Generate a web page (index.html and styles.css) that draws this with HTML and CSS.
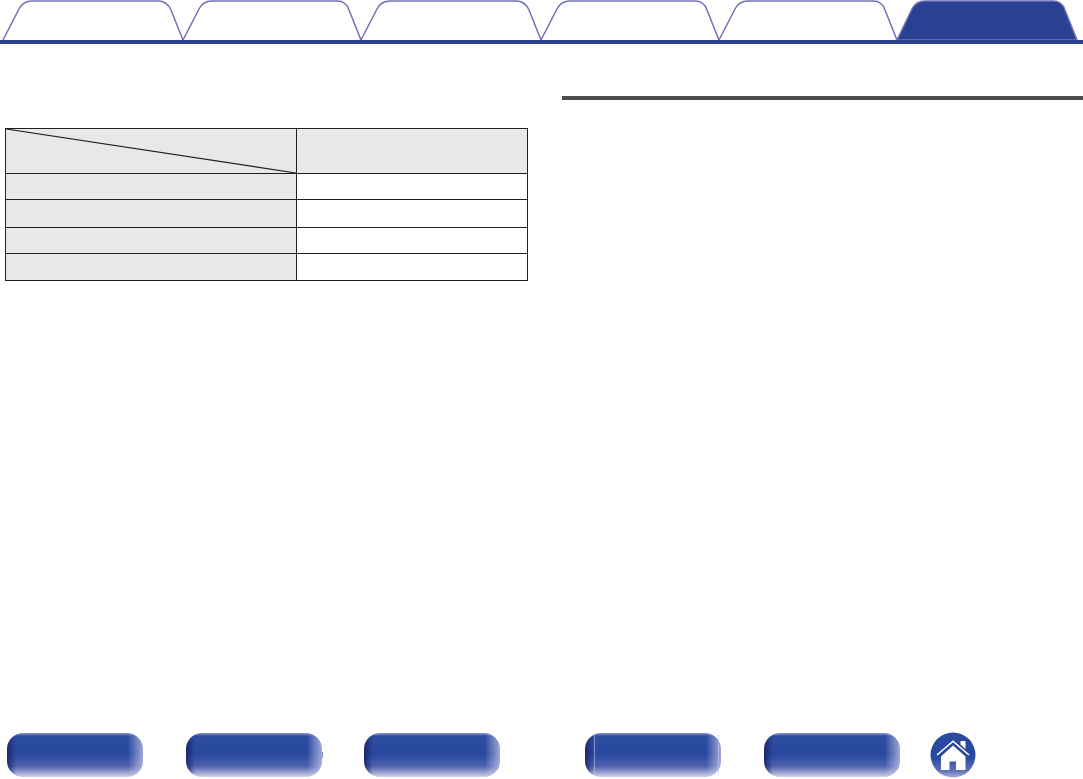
FILE: index.html
```html
<!DOCTYPE html>
<html lang="en">
<head>
    <meta charset="UTF-8">
    <meta name="viewport" content="width=device-width, initial-scale=1.0">
    <title>Manual page</title>
    <link rel="stylesheet" href="styles.css">
</head>
<body>
    <header class="tabs">
        <svg class="tabs-art" width="1083" height="44" viewBox="0 0 1083 44">
            <path class="tab" d="M3 40 L19 9 Q23 1 32 1 L158 1 Q167 1 171 10 L183 40"/>
            <path class="tab" d="M183 40 L199 9 Q203 1 212 1 L337 1 Q346 1 349 10 L361 40"/>
            <path class="tab" d="M361 40 L377 9 Q381 1 390 1 L516 1 Q525 1 529 10 L541 40"/>
            <path class="tab" d="M541 40 L557 9 Q561 1 570 1 L695 1 Q704 1 707 10 L719 40"/>
            <path class="tab" d="M719 40 L735 9 Q739 1 748 1 L873 1 Q882 1 885 10 L897 40"/>
            <path class="tab tab-active" d="M897 40 L912 9 Q916 1 925 1 L1053 1 Q1062 1 1065 10 L1077 40 Z"/>
            <rect class="tab-line" x="0" y="40" width="1083" height="4"/>
        </svg>
    </header>

    <main class="page">
        <section class="col-left">
            <table class="spec">
                <tr class="row-head">
                    <th class="diag">
                        <svg class="diag-line" viewBox="0 0 290 45" preserveAspectRatio="none">
                            <line x1="0" y1="0" x2="290" y2="45"/>
                        </svg>
                    </th>
                    <th></th>
                </tr>
                <tr class="row-a"><th></th><td></td></tr>
                <tr class="row-b"><th></th><td></td></tr>
                <tr class="row-a"><th></th><td></td></tr>
                <tr class="row-c"><th></th><td></td></tr>
            </table>
        </section>
        <section class="col-right">
            <div class="rule"></div>
        </section>
    </main>

    <footer class="foot">
        <div class="foot-group">
            <a class="pill"></a>
            <a class="pill pill-notch"></a>
            <a class="pill"></a>
        </div>
        <div class="foot-group">
            <a class="pill pill-lines"></a>
            <a class="pill"></a>
        </div>
        <a class="home">
            <svg width="46" height="46" viewBox="0 0 46 46">
                <defs>
                    <linearGradient id="homeBg" x1="0" y1="0" x2="0" y2="1">
                        <stop offset="0" stop-color="#2b4a9f"/>
                        <stop offset="0.55" stop-color="#2a4a9f"/>
                        <stop offset="0.85" stop-color="#5f70b8"/>
                        <stop offset="1" stop-color="#a9b0da"/>
                    </linearGradient>
                </defs>
                <circle cx="23" cy="23" r="22.5" fill="url(#homeBg)"/>
                <path fill="#fff" d="M30.5 9 H35.5 V17 L30.5 12.5 Z"/>
                <path fill="none" stroke="#fff" stroke-width="1.6" d="M7 23 L23 9.2 L39 23"/>
                <path fill="#fff" fill-rule="evenodd" d="M23 13.5 L35.5 24.5 V38 H11 V24.5 Z M19.5 29.5 V38 H26 V29.5 Z"/>
            </svg>
        </a>
    </footer>
</body>
</html>
```

FILE: styles.css
```css
html, body {
    height: 100%;
}
body {
    display: flex;
    flex-direction: column;
    margin: 0;
    height: 779px;
    overflow: hidden;
    background-color: #fff;
    font-family: "Liberation Sans", Arial, sans-serif;
}

/* Top tabs */
.tabs {
    height: 44px;
}
.tabs-art {
    display: block;
}
.tab {
    fill: #fff;
    stroke: #6f70b9;
    stroke-width: 1.5;
}
.tab-active {
    fill: #2a4091;
}
.tab-line {
    fill: #2a4091;
}

/* Page body */
.page {
    display: flex;
    flex: 1;
    padding: 52px 0 0 5px;
}
.col-left {
    width: 523px;
    padding-top: 32px;
}
.col-right {
    flex: 1;
    margin-left: 34px;
}
.rule {
    height: 4px;
    background-color: #4d4b4b;
}

.spec {
    width: 523px;
    table-layout: fixed;
    border-collapse: collapse;
}
.spec th, .spec td {
    padding: 0;
    border: 1.5px solid #231f20;
}
.spec th {
    background-color: #e8e8e8;
}
.spec th:first-child {
    width: 290px;
}
.spec td {
    background-color: #fff;
}
.row-head { height: 45px; }
.row-a { height: 26px; }
.row-b { height: 28px; }
.row-c { height: 27px; }
.spec .diag {
    position: relative;
}
.diag-line {
    position: absolute;
    top: 0;
    left: 0;
    width: 100%;
    height: 100%;
}
.diag-line line {
    stroke: #231f20;
    stroke-width: 1.2;
}

/* Bottom nav */
.foot {
    display: flex;
    align-items: center;
    padding: 0 0 1px 7px;
}
.foot-group {
    display: flex;
    gap: 43px;
}
.foot-group + .foot-group {
    margin-left: 85px;
}
.pill {
    position: relative;
    display: block;
    width: 136px;
    height: 44px;
    border-radius: 16px;
    background:
        linear-gradient(90deg, rgba(24, 32, 96, 0.8) 0, rgba(24, 32, 96, 0) 9px, rgba(200, 200, 235, 0) calc(100% - 15px), rgba(200, 200, 235, 0.75) 100%),
        linear-gradient(180deg, #8f9ad0 0, #2f4ea2 3px, #27489f 48%, #5062b0 76%, #d0d3ec 100%);
}
.pill + .pill + .pill {
    margin-left: -1px;
}
.pill-notch::after {
    content: "";
    position: absolute;
    top: 19px;
    right: -1px;
    width: 1px;
    height: 6px;
    background-color: #8d90c8;
}
.pill-lines::before, .pill-lines::after {
    content: "";
    position: absolute;
    top: 2px;
    bottom: 2px;
    width: 1px;
    background-color: rgba(190, 195, 230, 0.6);
}
.pill-lines::before { left: 9px; }
.pill-lines::after { right: 2px; }
.home {
    display: block;
    width: 46px;
    height: 46px;
    margin-left: 30px;
}
.home svg {
    display: block;
}
```
